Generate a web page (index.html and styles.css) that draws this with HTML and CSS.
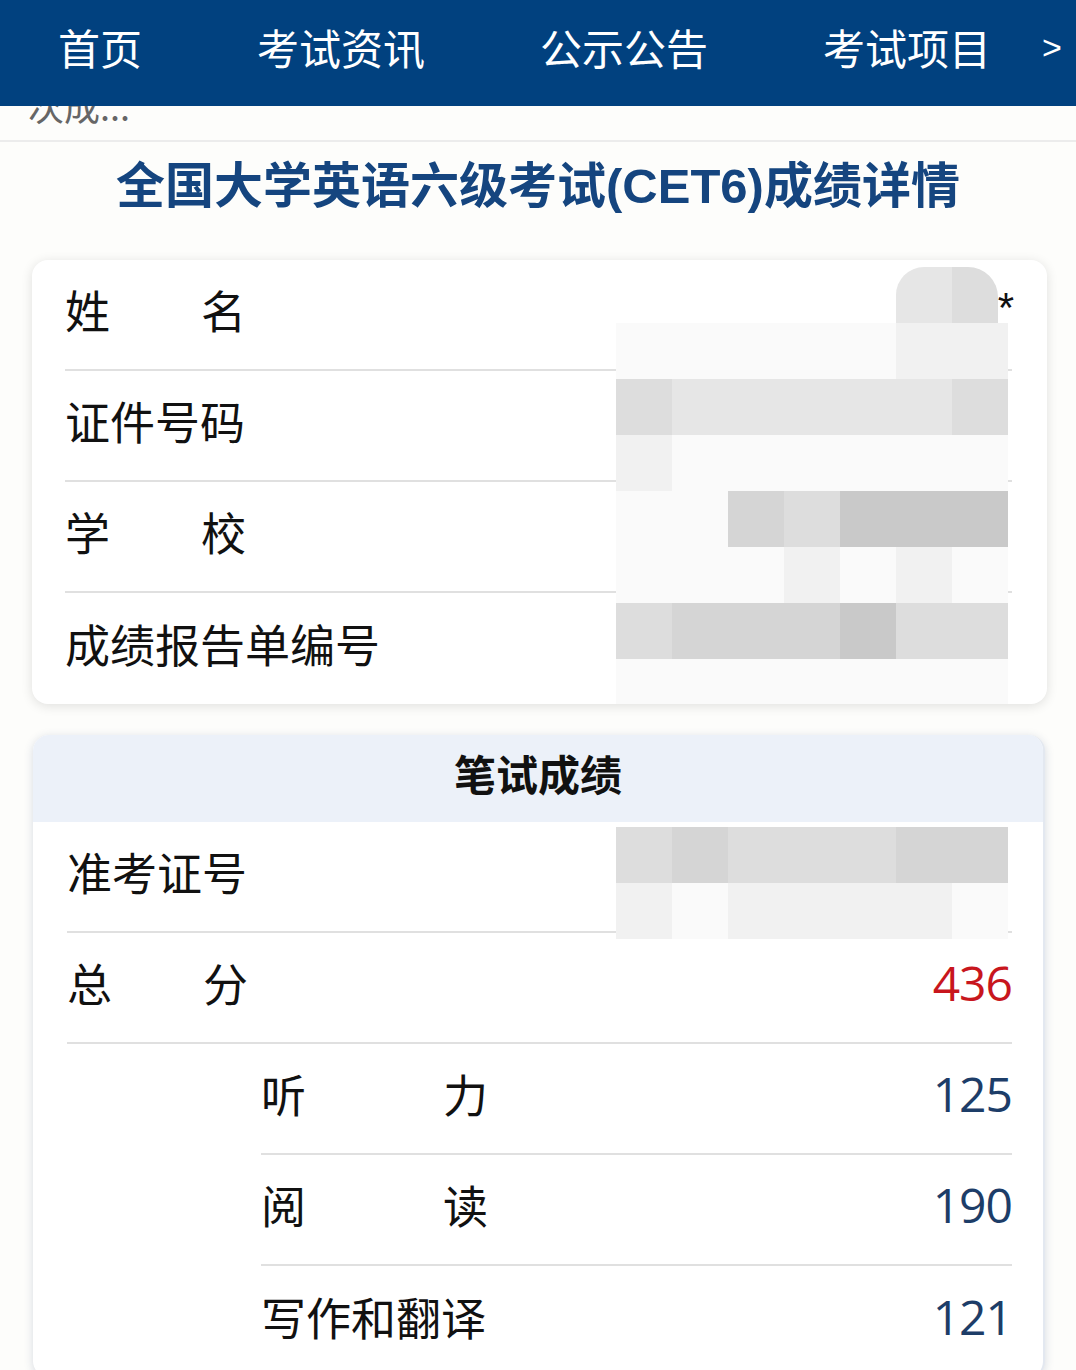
FILE: index.html
```html
<!DOCTYPE html>
<html lang="zh-CN">
<head>
    <meta charset="UTF-8">
    <meta name="viewport" content="width=device-width, initial-scale=1.0">
    <title>全国大学英语六级考试(CET6)成绩详情</title>
    <link rel="stylesheet" href="styles.css">
</head>
<body>
    <nav class="topnav">
        <a class="nav-item">首页</a>
        <a class="nav-item">考试资讯</a>
        <a class="nav-item">公示公告</a>
        <a class="nav-item">考试项目</a>
        <a class="nav-more">&gt;</a>
    </nav>

    <div class="crumb">次成...</div>

    <h1 class="title">全国大学英语六级考试(CET6)成绩详情</h1>

    <section class="card info-card">
        <div class="row">
            <span class="label w4"><i>姓</i><i>名</i></span>
            <span class="value star">*</span>
        </div>
        <div class="row">
            <span class="label">证件号码</span>
            <span class="value"></span>
        </div>
        <div class="row">
            <span class="label w4"><i>学</i><i>校</i></span>
            <span class="value"></span>
        </div>
        <div class="row last">
            <span class="label">成绩报告单编号</span>
            <span class="value"></span>
        </div>

        <!-- 打码 -->
        <div class="mosaic mosaic-info">
            <b></b><b></b><b></b><b></b><b></b><b class="m3 corner"></b><b class="m4 corner-r"></b>
            <b class="m1"></b><b class="m1"></b><b class="m1"></b><b class="m1"></b><b class="m1"></b><b class="m2"></b><b class="m2"></b>
            <b class="m4"></b><b class="m3"></b><b class="m3"></b><b class="m3"></b><b class="m3"></b><b class="m3"></b><b class="m4"></b>
            <b class="m2"></b><b class="m1"></b><b class="m1"></b><b class="m1"></b><b class="m1"></b><b class="m1"></b><b class="m1"></b>
            <b class="m1"></b><b class="m1"></b><b class="m5"></b><b class="m4"></b><b class="m6"></b><b class="m6"></b><b class="m6"></b>
            <b class="m1"></b><b class="m1"></b><b class="m1"></b><b class="m2"></b><b class="m1"></b><b class="m2"></b><b class="m1"></b>
            <b class="m4"></b><b class="m5"></b><b class="m5"></b><b class="m5"></b><b class="m6"></b><b class="m4"></b><b class="m4"></b>
            <b class="m1"></b><b class="m1"></b><b class="m1"></b><b class="m1"></b><b class="m1"></b><b class="m1"></b><b class="m1"></b>
        </div>
    </section>

    <section class="card score-card">
        <div class="card-head">笔试成绩</div>
        <div class="row">
            <span class="label">准考证号</span>
            <span class="value"></span>
        </div>
        <div class="row">
            <span class="label w4"><i>总</i><i>分</i></span>
            <span class="value num total">436</span>
        </div>
        <div class="row sub">
            <span class="label w5"><i>听</i><i>力</i></span>
            <span class="value num">125</span>
        </div>
        <div class="row sub">
            <span class="label w5"><i>阅</i><i>读</i></span>
            <span class="value num">190</span>
        </div>
        <div class="row sub last">
            <span class="label w5">写作和翻译</span>
            <span class="value num">121</span>
        </div>

        <div class="mosaic mosaic-score">
            <b class="m4"></b><b class="m5"></b><b class="m4"></b><b class="m4"></b><b class="m4"></b><b class="m5"></b><b class="m5"></b>
            <b class="m2"></b><b class="m1"></b><b class="m2"></b><b class="m2"></b><b class="m2"></b><b class="m2"></b><b class="m1"></b>
        </div>
    </section>
</body>
</html>
```
FILE: styles.css
```css
body {
    margin: 0;
    background: #fdfdfb;
    font-family: "Noto Sans CJK SC", "Noto Sans", sans-serif;
    color: #111;
}

.topnav {
    position: relative;
    z-index: 2;
    height: 106px;
    background: #01417f;
    display: flex;
    align-items: center;
    padding: 0 0 12px 58px;
    box-sizing: border-box;
}
.nav-item {
    color: #fff;
    font-size: 42px;
    line-height: 1;
    margin-right: 115px;
}
.nav-more {
    color: #fff;
    font-family: "Liberation Sans", sans-serif;
    font-size: 34px;
    margin-left: -64px;
}

.crumb {
    margin-top: -19px;
    padding: 0 28px 17px;
    font-size: 36px;
    line-height: 36px;
    color: #666;
    border-bottom: 2px solid #ececec;
}

.title {
    margin: 14px 0 44px;
    text-align: center;
    font-family: "Liberation Sans", "Noto Sans CJK SC", sans-serif;
    font-size: 49px;
    line-height: 60px;
    font-weight: bold;
    color: #15457f;
}

.card {
    position: relative;
    background: #fff;
    border-radius: 16px;
    overflow: hidden;
}
.info-card {
    margin: 0 29px 0 32px;
    box-shadow: 0 2px 12px rgba(0,0,0,0.12);
}
.score-card {
    margin: 31px 31px 0 33px;
    box-shadow: 0 2px 10px rgba(40,60,110,0.18);
    border-right: 2px solid #e3e8f0;
}
.card-head {
    height: 87px;
    line-height: 76px;
    background: #ecf1f9;
    text-align: center;
    font-size: 42px;
    font-weight: bold;
    color: #111;
}

.row {
    display: flex;
    align-items: center;
    justify-content: space-between;
    height: 111px;
    padding-bottom: 10px;
    box-sizing: border-box;
    margin: 0 35px 0 33px;
    border-bottom: 2px solid #e0e0e0;
}
.score-card .row {
    margin: 0 31px 0 34px;
}
.score-card .row.sub {
    margin-left: 228px;
}
.row.last {
    border-bottom: none;
}

.label {
    font-size: 45px;
    line-height: 1;
    color: #111;
}
.label i {
    font-style: normal;
}
.w4, .w5 {
    display: flex;
    justify-content: space-between;
}
.w4 { width: 181px; }
.w5 { width: 227px; }

.value {
    font-size: 36px;
}
.star {
    position: relative;
    z-index: 1;
    font-family: "Liberation Sans", sans-serif;
    font-size: 42px;
    margin-top: -4px;
    margin-right: -2px;
}
.num {
    font-family: "Open Sans", "Noto Sans", sans-serif;
    font-size: 48px;
    line-height: 1;
    color: #1d3d68;
    letter-spacing: -1px;
}
.num.total {
    color: #c8161d;
}

/* 打码块 */
.mosaic {
    position: absolute;
    display: grid;
    grid-template-columns: repeat(7, 56px);
    grid-auto-rows: 56px;
}
.mosaic-info {
    left: 584px;
    top: 7px;
}
.mosaic-score {
    left: 583px;
    top: 92px;
}
.mosaic b { display: block; }
.mosaic .m1 { background: #fafafa; }
.mosaic .m2 { background: #f1f1f1; }
.mosaic .m3 { background: #e6e6e6; }
.mosaic .m4 { background: #dddddd; }
.mosaic .m5 { background: #d5d5d5; }
.mosaic .m6 { background: #c9c9c9; }
.mosaic .corner { border-top-left-radius: 28px; }
.mosaic .corner-r { border-top-right-radius: 30px; margin-right: 10px; }
```
